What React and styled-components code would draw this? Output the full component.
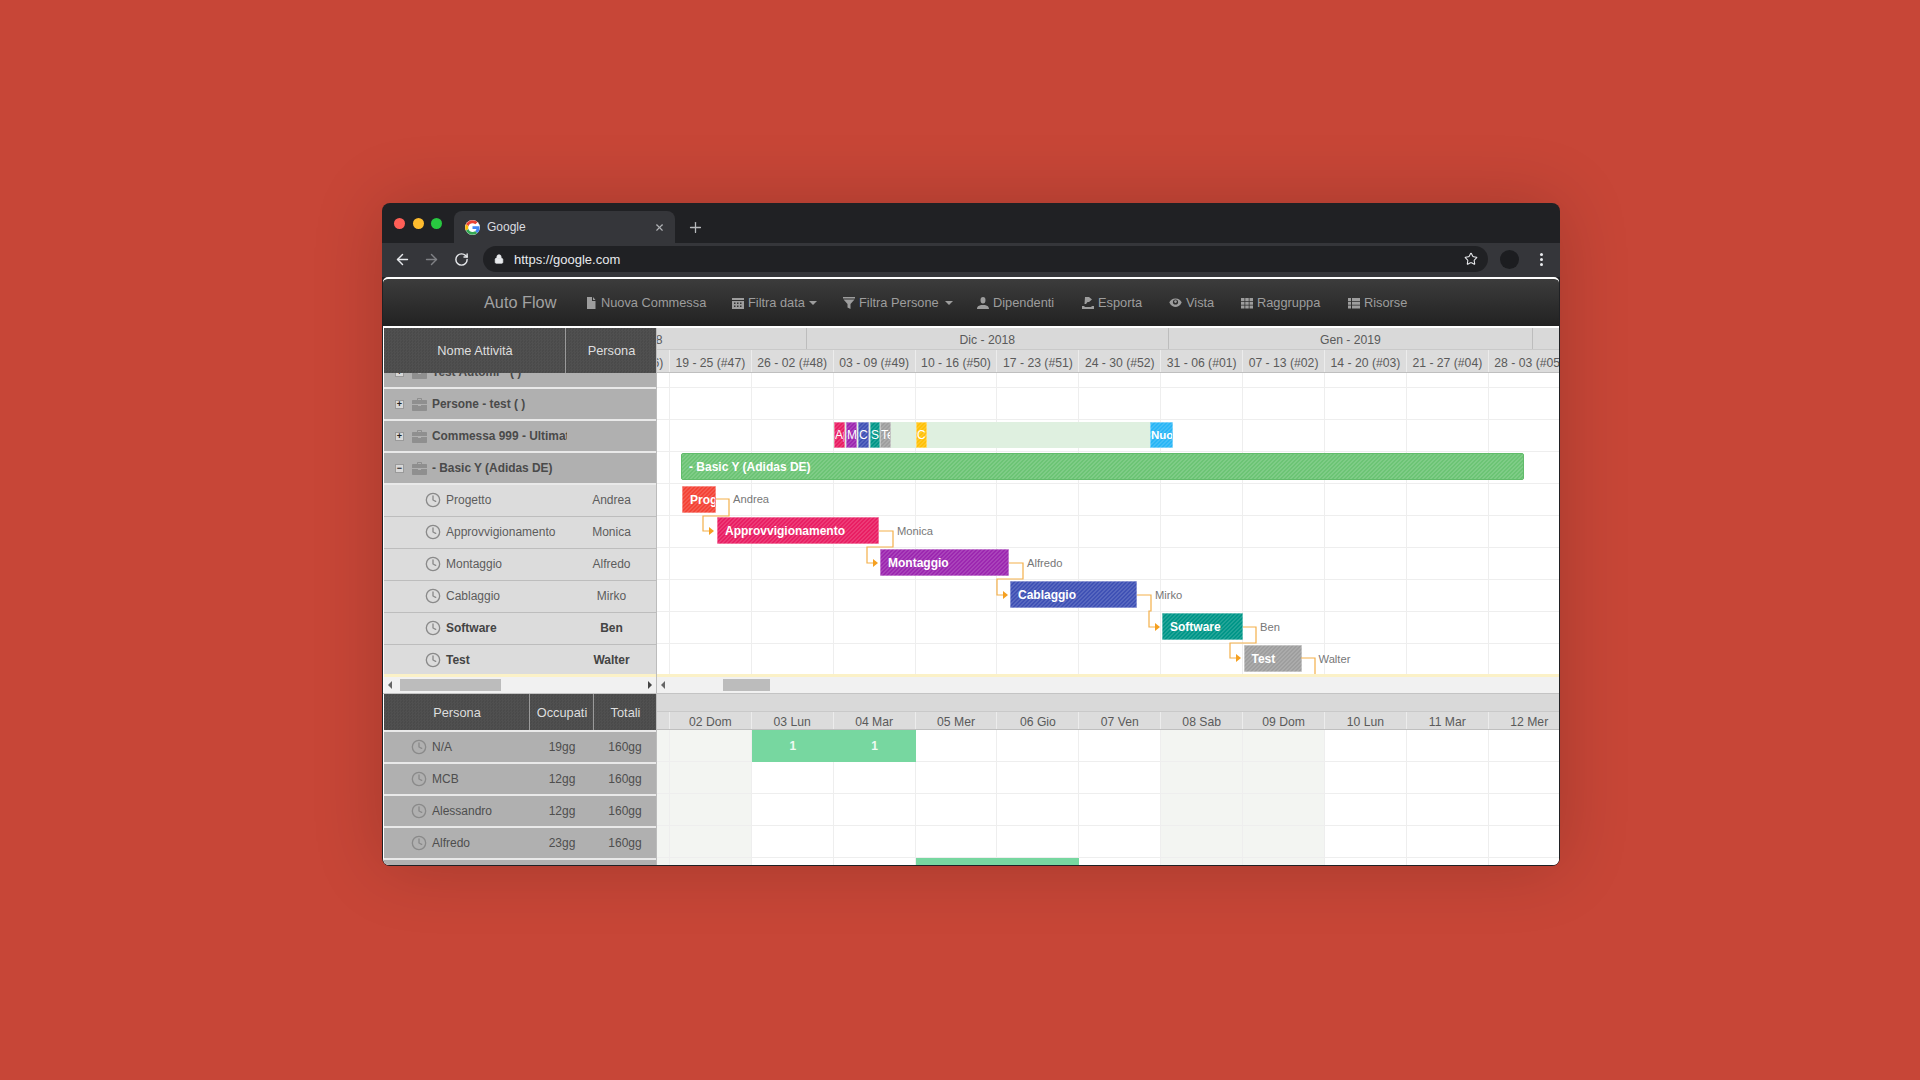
import React from 'react';
import styled, { createGlobalStyle } from 'styled-components';
import { ArrowLeft, ArrowRight, RotateCw, Lock, Star, Clock, X, Plus } from 'lucide-react';

const Global = createGlobalStyle`
  html, body { margin: 0; padding: 0; background: #c74637; }
  body { font-family: "Liberation Sans", Arial, sans-serif; }
  * { box-sizing: border-box; }
`;

const COL = 81.9;
const HATCH = `
  background-image: linear-gradient(135deg, rgba(255,255,255,.13) 25%, transparent 25%, transparent 50%, rgba(255,255,255,.13) 50%, rgba(255,255,255,.13) 75%, transparent 75%);
  background-size: 4px 4px;
`;
const DITHER = `
  background-image: repeating-conic-gradient(rgba(255,255,255,.035) 0 25%, transparent 0 50%);
  background-size: 3px 3px;
`;

const Page = styled.div`
  width: 1920px; height: 1080px; padding: 203px 0 0 382px; overflow: hidden;
`;
const Win = styled.div`
  width: 1178px; height: 663px; display: flex; flex-direction: column;
  background: #202124; border-radius: 8px; overflow: hidden;
  box-shadow: 0 0 70px rgba(0,0,0,.18);
`;
const TabStrip = styled.div`
  height: 40px; flex: none; display: flex; align-items: flex-end; padding-left: 12px;
`;
const Dots = styled.div`
  display: flex; gap: 7.5px; width: 60px; height: 32px; padding-top: 7px; flex: none;
`;
const Dot = styled.span`
  width: 11px; height: 11px; border-radius: 50%; background: ${p => p.$c};
`;
const Tab = styled.div`
  width: 221px; height: 32px; background: #35363a; border-radius: 8px 8px 0 0; flex: none;
  display: flex; align-items: center; padding: 0 10px 0 11px; color: #dadce0; font-size: 12px;
`;
const TabTitle = styled.span`
  margin-left: 7px; flex: 1;
`;
const NewTab = styled.div`
  height: 32px; display: flex; align-items: center; margin-left: 12px; color: #b8babd;
`;
const AddrBar = styled.div`
  height: 34px; flex: none; background: #35363a; display: flex; align-items: center; padding: 0 0 2px 12px; color: #e8eaed;
`;
const NavBtn = styled.div`
  width: ${p => p.$w || 29}px; display: flex; color: ${p => p.$dim ? '#7f8185' : '#e8eaed'};
  padding-left: ${p => p.$pl || 0}px;
`;
const Omni = styled.div`
  width: 1005px; height: 26px; margin-left: 2px; background: #202124; border-radius: 13px;
  display: flex; align-items: center; padding-left: 11px; font-size: 13px; color: #e8eaed;
`;
const UrlText = styled.span`
  margin-left: 10px; flex: 1;
`;
const StarWrap = styled.span`
  display: flex; margin-right: 10px;
`;
const Avatar = styled.div`
  width: 19px; height: 19px; border-radius: 50%; background: #1c1d20; margin-left: 12px; flex: none;
`;
const Kebab = styled.div`
  display: flex; flex-direction: column; gap: 2px; margin-left: 21px;
  span { width: 3px; height: 3px; border-radius: 50%; background: #e8eaed; }
`;

const Body = styled.div`
  flex: 1; min-height: 0; margin: 0 1px 1px; background: #fff; border-top: 2px solid #fff; border-radius: 5px 5px 6px 6px;
  display: flex; flex-direction: column; overflow: hidden;
`;
const Navbar = styled.nav`
  height: 47px; flex: none; margin-bottom: 2px; padding-left: 101px;
  background: linear-gradient(#3c3c3c, #222222); border-radius: 4px 4px 0 0;
  display: flex; align-items: center; color: #9d9d9d; font-size: 12.8px;
`;
const Brand = styled.span`
  font-size: 16.3px; color: #a2a2a2; width: 101px; flex: none;
`;
const NavItem = styled.span`
  width: ${p => p.$w}px; flex: none; display: flex; align-items: center; gap: 4px; color: #9d9d9d;
  svg { flex: none; }
`;
const Caret = styled.i`
  width: 0; height: 0; margin-left: ${p => p.$gap || 0}px; border-left: 4px solid transparent; border-right: 4px solid transparent;
  border-top: 4px solid #9d9d9d;
`;

const Upper = styled.div`
  height: 366px; flex: none; display: flex; border-bottom: 1px solid #c4c4c4;
`;
const Lower = styled.div`
  flex: 1; min-height: 0; display: flex;
`;
const LeftPane = styled.div`
  width: 273px; margin-left: 1px; flex: none; display: flex; flex-direction: column; border-right: 1px solid #bcbcbc; overflow: hidden;
`;
const RightPane = styled.div`
  flex: 1; min-width: 0; display: flex; flex-direction: column; overflow: hidden;
`;
const DarkHead = styled.div`
  height: ${p => p.$h}px; flex: none; display: flex; background-color: #4a4a4a; ${DITHER} color: #dedede; font-size: 12.8px;
`;
const HeadCell = styled.div`
  width: ${p => p.$w}px; flex: none; display: flex; align-items: center; justify-content: center; padding-left: 1px;
  border-right: ${p => p.$line ? '1px solid #9a9a9a' : 'none'};
`;
const List = styled.div`
  height: 301px; flex: none; overflow: hidden; background: #dcdcdc;
`;
const ListInner = styled.div`
  margin-top: -16px;
`;
const Row = styled.div`
  height: 32px; display: flex; align-items: center; color: ${p => p.$group ? '#4a4a4a' : p.$strong ? '#444' : '#5c5c5c'};
  font-size: ${p => p.$group ? 11.9 : 12}px; font-weight: ${p => (p.$group || p.$strong) ? 'bold' : 'normal'};
  background: ${p => p.$group ? '#b0b0b0' : '#dcdcdc'};
  border-bottom: ${p => p.$group ? '2px solid #e9e9e9' : '1px solid #bdbdbd'};
  padding-bottom: ${p => p.$group ? 0 : 1}px;
`;
const Toggle = styled.span`
  width: 9px; height: 9px; margin-left: 11px; flex: none; border: 1px solid #9a9a9a; background: #d8d8d8;
  display: flex; align-items: center; justify-content: center; font-size: 9px; line-height: 7px; color: #222; font-weight: bold;
`;
const GroupName = styled.span`
  width: 135px; margin-left: 5px; white-space: nowrap; overflow: hidden;
`;
const TaskName = styled.span`
  width: 120px; margin-left: 5px; white-space: nowrap; flex: none;
`;
const Person = styled.span`
  width: 91px; text-align: center; flex: none;
`;
const ClockWrap = styled.span`
  display: flex; flex: none; margin-left: ${p => p.$left}px; color: #8a8a8a;
`;
const Bri = styled.span`
  display: flex; margin-left: 8px; flex: none;
`;
const ScrollBar = styled.div`
  height: 16px; flex: none; background: #f1f1f1; display: flex; align-items: center; padding: 0 4px;
`;
const Arrow = styled.i`
  width: 0; height: 0; flex: none; border-top: 4px solid transparent; border-bottom: 4px solid transparent;
  ${p => p.$dir === 'l' ? 'border-right: 4px solid #666;' : 'border-left: 4px solid #444;'}
`;
const Thumb = styled.div`
  width: ${p => p.$w}px; height: 12px; background: #bcbcbc; margin-left: ${p => p.$m}px; flex: none;
`;
const Spacer = styled.div`
  flex: 1;
`;
const YellowLine = styled.div`
  height: 3px; flex: none; background: #fbf1c7;
`;

const TimeHead = styled.div`
  flex: none; background: #d9d9d9; overflow: hidden; color: #5a5a5a; font-size: 12.2px;
`;
const MonthRow = styled.div`
  height: 22px; display: flex; margin-left: -197.4px; border-bottom: 1px solid #c9c9c9; width: 1500px;
`;
const Band = styled.div`
  height: 18px; border-bottom: 1px solid #c9c9c9;
`;
const Month = styled.div`
  width: ${p => p.$w}px; flex: none; border-right: 1px solid #bdbdbd; display: flex; align-items: center; justify-content: center; padding-top: 3px;
`;
const TickRow = styled.div`
  height: ${p => p.$h}px; display: flex; margin-left: -69px; width: 1200px; background: #dcdcdc; border-bottom: 1px solid #bfbfbf;
`;
const Tick = styled.div`
  width: ${COL}px; flex: none; border-right: 1px solid #ececec; display: flex; align-items: center; justify-content: center; white-space: nowrap; padding-top: ${p => p.$pt}px;
`;
const Canvas = styled.div`
  height: 304px; flex: none; position: relative; overflow: hidden;
  background-color: #fff;
  background-image: linear-gradient(180deg, transparent 14px, #eeeeee 14px, #eeeeee 15px, transparent 15px);
  background-size: 100% 32px;
  border-bottom: 3px solid #fbf1c7;
`;
const GridCols = styled.div`
  position: absolute; top: 0; bottom: 0; left: -69px; display: flex;
`;
const GridCol = styled.div`
  width: ${COL}px; flex: none; border-right: 1px solid #eeeeee;
`;
const Bar = styled.div`
  position: absolute; left: ${p => p.$x - 657}px; top: ${p => p.$y - 373}px; width: ${p => p.$w}px; height: ${p => p.$h || 27}px;
  background-color: ${p => p.$c}; ${HATCH}
  border: 1px solid ${p => p.$b || 'rgba(255,255,255,.35)'}; border-radius: ${p => p.$r || 1}px;
  color: #fff; font-size: ${p => p.$fs || 12}px; font-weight: ${p => p.$thin ? 'normal' : 'bold'}; line-height: ${p => (p.$h || 27) - 1}px;
  padding-left: ${p => p.$pl ?? 7}px; white-space: nowrap; overflow: hidden;
`;
const Track = styled.div`
  position: absolute; left: ${833 - 657}px; top: ${422 - 373}px; width: 339px; height: 26px; background: #dff0e0;
`;
const Label = styled.span`
  position: absolute; left: ${p => p.$x - 657}px; top: ${p => p.$y - 373 - 7}px; font-size: 11.2px; line-height: 14px; color: #777; white-space: nowrap;
`;
const Links = styled.svg`
  position: absolute; left: 0; top: 0; width: 100%; height: 100%;
`;
const HeatBody = styled.div`
  flex: 1; margin-left: -69px; width: 1200px; overflow: hidden;
`;
const HeatRow = styled.div`
  height: 32px; display: flex;
`;
const HeatCell = styled.div`
  width: ${COL}px; height: 32px; flex: none; display: flex; align-items: center; justify-content: center; color: #eefaf2; font-size: 12px; font-weight: bold;
  background: ${p => p.$busy ? '#77d7a0' : p.$weekend ? '#f3f5f2' : '#fff'};
  border-right: ${p => p.$busy ? 'none' : '1px solid #eeeeee'};
  border-bottom: ${p => p.$busy ? 'none' : '1px solid #eeeeee'};
`;
const StatList = styled.div`
  padding-top: 2px; background: #e9e9e9;
`;
const StatRow = styled.div`
  height: 32px; display: flex; align-items: center; background: #b0b0b0; border-bottom: 2px solid #e9e9e9; color: #4e4e4e; font-size: 12px;
`;
const StatName = styled.span`
  width: 98px; margin-left: 5px; flex: none;
`;
const StatVal = styled.span`
  width: ${p => p.$w}px; flex: none; text-align: center;
`;

const Ic = ({ children, w = 12, h = 12 }) => (
  <svg width={w} height={h} viewBox="0 0 12 12" fill="#9d9d9d">{children}</svg>
);
const IFile = () => <Ic><path d="M2 0h5v4h3.5v8H2zM8 0l2.5 3H8z" /></Ic>;
const ICal = () => <Ic><path d="M0 1h12v2H0zM0 4h12v8H0z" /><path d="M2 5.5h1.5v1.5H2zM5 5.5h1.5v1.5H5zM8 5.5h1.5v1.5H8zM2 8.5h1.5V10H2zM5 8.5h1.5V10H5zM8 8.5h1.5V10H8z" fill="#333" /></Ic>;
const IFilter = () => <Ic><path d="M0 0h12v1.5H0zM.5 2.5h11L7.5 7v5l-3-1.500V7z" /></Ic>;
const IUser = () => <Ic><path d="M3.500 3a2.500 3 0 1 1 5 0 2.500 3.500 0 0 1-5 0zM0 12c0-3 2.500-3.500 4-4h4c1.500.5 4 1 4 4z" /></Ic>;
const IExport = () => <Ic><path d="M3 0h4l3 2.500L7 5H5.500L4 7H2.500zM0 9h2l1 1h6l1-1h2v3H0z" /></Ic>;
const IEye = () => <svg width="13" height="12" viewBox="0 0 13 12"><path d="M.3 5.500C2 2 4.500 1.500 6.500 1.500s4.500.5 6.200 4c-1.700 3.500-4.200 4.500-6.200 4.500S2 9 .3 5.500z" fill="#9d9d9d" /><circle cx="6.500" cy="5" r="2.600" fill="#2e2e2e" /><circle cx="6.500" cy="4.600" r="1.300" fill="#9d9d9d" /></svg>;
const ITh = () => <Ic><path d="M0 1h3.500v3H0zM4.250 1h3.500v3h-3.500zM8.500 1H12v3H8.500zM0 4.750h3.500v3H0zM4.250 4.750h3.500v3h-3.500zM8.500 4.750H12v3H8.500zM0 8.500h3.500v3H0zM4.250 8.500h3.500v3h-3.500zM8.500 8.500H12v3H8.500z" /></Ic>;
const IList = () => <Ic><path d="M0 1h3v3H0zM4 1h8v3H4zM0 4.750h3v3H0zM4 4.750h8v3H4zM0 8.500h3v3H0zM4 8.500h8v3H4z" /></Ic>;

const Briefcase = () => (
  <svg width="15" height="13" viewBox="0 0 15 13" fill="#8f8f8f">
    <path d="M5 2V.8C5 .3 5.300 0 5.800 0h3.400c.5 0 .8.3.8.8V2h4c.6 0 1 .4 1 1v3H0V3c0-.6.4-1 1-1zm1 0h3V1H6z" />
    <path d="M0 7h6v1h3V7h6v5c0 .6-.4 1-1 1H1c-.6 0-1-.4-1-1z" />
  </svg>
);
const GoogleG = () => (
  <svg width="15" height="15" viewBox="0 0 48 48">
    <circle cx="24" cy="24" r="24" fill="#fff" />
    <path fill="#EA4335" d="M24 10c3.500 0 6.600 1.200 9.100 3.500l6.700-6.700C35.700 3 30.300.7 24 .7 14.800.7 6.900 6 3.100 13.700l7.900 6.100C12.800 14.100 17.900 10 24 10z" />
    <path fill="#4285F4" d="M46.500 24.500c0-1.600-.2-3.100-.4-4.500H24v9h12.700c-.6 2.900-2.200 5.300-4.700 7l7.600 5.900c4.400-4.100 6.900-10.100 6.900-17.400z" />
    <path fill="#FBBC05" d="M11 28.200c-.5-1.400-.7-2.800-.7-4.200s.3-2.900.7-4.200l-7.900-6.100C1.500 17 .6 20.400.6 24s.9 7 2.500 10.300z" />
    <path fill="#34A853" d="M24 47.300c6.300 0 11.600-2.100 15.600-5.400L32 36c-2.100 1.400-4.800 2.300-8 2.300-6.100 0-11.200-4.100-13-9.800l-7.900 6.100C6.900 42 14.800 47.300 24 47.300z" />
  </svg>
);

const weeks = ['12 - 18 (#46)', '19 - 25 (#47)', '26 - 02 (#48)', '03 - 09 (#49)', '10 - 16 (#50)', '17 - 23 (#51)', '24 - 30 (#52)', '31 - 06 (#01)', '07 - 13 (#02)', '14 - 20 (#03)', '21 - 27 (#04)', '28 - 03 (#05)'];
const days = ['01 Sab', '02 Dom', '03 Lun', '04 Mar', '05 Mer', '06 Gio', '07 Ven', '08 Sab', '09 Dom', '10 Lun', '11 Mar', '12 Mer'];
const groups = [
  { t: 'Test Automi - ( )', s: '+' }, { t: 'Persone - test ( )', s: '+' },
  { t: 'Commessa 999 - Ultimate', s: '+' }, { t: '- Basic Y (Adidas DE)', s: '−' },
];
const tasks = [['Progetto', 'Andrea'], ['Approvvigionamento', 'Monica'], ['Montaggio', 'Alfredo'], ['Cablaggio', 'Mirko'], ['Software', 'Ben', 1], ['Test', 'Walter', 1]];
const stats = [['N/A', '19gg'], ['MCB', '12gg'], ['Alessandro', '12gg'], ['Alfredo', '23gg'], ['', '']];
const chips = [
  ['Approvvigionamento', 834, 11, '#e91e63'], ['Montaggio', 846, 11, '#9c27b0'], ['Cablaggio', 858, 10.5, '#3f51b5'], ['Software', 870, 9.5, '#009688'],
  ['Test', 880, 11, '#9e9e9e'], ['Collaudo', 916, 11, '#ffc107'],
];
const bars = [
  ['Progetto', 682, 486, 34, '#f44336'], ['Approvvigionamento', 717, 517, 162, '#e91e63'], ['Montaggio', 880, 549, 129, '#9c27b0'],
  ['Cablaggio', 1010, 581, 127, '#3f51b5'], ['Software', 1162, 613, 81, '#009688'], ['Test', 1243.5, 645, 58, '#9e9e9e'],
];
const labels = [['Andrea', 733, 499], ['Monica', 897, 531], ['Alfredo', 1027, 563], ['Mirko', 1155, 595], ['Ben', 1260, 627], ['Walter', 1318.5, 659]];
const links = [
  [716, 729, 703, 499, 516, 531], [879, 893, 867, 531, 547, 563], [1009, 1023, 997, 563, 579, 595],
  [1137, 1151, 1149, 595, 611, 627], [1243, 1256, 1230, 627, 643, 658],
];
const busy = { 0: [2, 3], 4: [4, 5] };
const weekend = [0, 1, 7, 8];

export default function App() {
  return (
    <Page>
      <Global />
      <Win>
        <TabStrip>
          <Dots><Dot $c="#ff5f57" /><Dot $c="#febc2e" /><Dot $c="#28c840" /></Dots>
          <Tab>
            <GoogleG />
            <TabTitle>Google</TabTitle>
            <X size={11} color="#b0b2b5" strokeWidth={2.5} />
          </Tab>
          <NewTab><Plus size={17} strokeWidth={1.8} /></NewTab>
        </TabStrip>
        <AddrBar>
          <NavBtn><ArrowLeft size={17} strokeWidth={2} /></NavBtn>
          <NavBtn $dim><ArrowRight size={17} strokeWidth={2} /></NavBtn>
          <NavBtn $pl={2}><RotateCw size={15} strokeWidth={2.3} /></NavBtn>
          <Omni>
            <Lock size={10} fill="#e8eaed" color="#e8eaed" />
            <UrlText>https://google.com</UrlText>
            <StarWrap><Star size={14} strokeWidth={1.8} /></StarWrap>
          </Omni>
          <Avatar />
          <Kebab><span /><span /><span /></Kebab>
        </AddrBar>
        <Body>
          <Navbar>
            <Brand>Auto Flow</Brand>
            <NavItem $w={147}><IFile />Nuova Commessa</NavItem>
            <NavItem $w={111}><ICal />Filtra data<Caret /></NavItem>
            <NavItem $w={134}><IFilter />Filtra Persone<Caret $gap={2} /></NavItem>
            <NavItem $w={105}><IUser />Dipendenti</NavItem>
            <NavItem $w={87}><IExport />Esporta</NavItem>
            <NavItem $w={72}><IEye />Vista</NavItem>
            <NavItem $w={107}><ITh />Raggruppa</NavItem>
            <NavItem $w={70}><IList />Risorse</NavItem>
          </Navbar>
          <Upper>
            <LeftPane>
              <DarkHead $h={45}>
                <HeadCell $w={182} $line>Nome Attività</HeadCell>
                <HeadCell $w={90}>Persona</HeadCell>
              </DarkHead>
              <List>
                <ListInner>
                  {groups.map(g => (
                    <Row key={g.t} $group>
                      <Toggle>{g.s}</Toggle>
                      <Bri><Briefcase /></Bri>
                      <GroupName>{g.t}</GroupName>
                    </Row>
                  ))}
                  {tasks.map(([t, p, s]) => (
                    <Row key={t} $strong={s}>
                      <ClockWrap $left={41}><Clock size={16} /></ClockWrap>
                      <TaskName>{t}</TaskName>
                      <Person>{p}</Person>
                    </Row>
                  ))}
                </ListInner>
              </List>
              <YellowLine />
              <ScrollBar>
                <Arrow $dir="l" />
                <Thumb $w={101} $m={8} />
                <Spacer />
                <Arrow $dir="r" />
              </ScrollBar>
            </LeftPane>
            <RightPane>
              <TimeHead>
                <MonthRow>
                  <Month $w={347}>Nov - 2018</Month>
                  <Month $w={362.3}>Dic - 2018</Month>
                  <Month $w={364}>Gen - 2019</Month>
                  <Month $w={300} />
                </MonthRow>
                <TickRow $h={23}>
                  {weeks.map(w => <Tick key={w} $pt={4}>{w}</Tick>)}
                </TickRow>
              </TimeHead>
              <Canvas>
                <GridCols>{weeks.map(w => <GridCol key={w} />)}</GridCols>
                <Track />
                {chips.map(([t, x, w, c]) => (
                  <Bar key={t} $x={x} $y={422} $w={w} $h={26} $c={c} $pl={0} $fs={12} $thin>{t}</Bar>
                ))}
                <Bar $x={1150} $y={422} $w={22.5} $h={26} $c="#29b6f6" $pl={0} $fs={11.5}>Nuovo</Bar>
                <Bar $x={681} $y={453} $w={843} $c="#6cc475" $b="#62bb6b" $r={2}>- Basic Y (Adidas DE)</Bar>
                {bars.map(([t, x, y, w, c]) => (
                  <Bar key={t} $x={x} $y={y} $w={w} $c={c}>{t}</Bar>
                ))}
                <Bar $x={1324} $y={675} $w={83} $h={4} $c="#a9d3da" $b="#a9d3da" />
                <Links>
                  {links.map(([x0, x1, x2, y0, y1, y2]) => (
                    <g key={x0}>
                      <path
                        d={`M${x0 - 657} ${y0 - 373}H${x1 - 657}V${y1 - 373}H${x2 - 657}V${y2 - 373}H${x2 + 7 - 657}`}
                        fill="none" stroke="#f4b04a" strokeWidth="1.2"
                      />
                      <path d={`M${x2 + 6 - 657} ${y2 - 373 - 4}l5 4l-5 4z`} fill="#f5a020" />
                    </g>
                  ))}
                  <path d={`M${1301 - 657} ${658 - 373}H${1315 - 657}V${677 - 373}`} fill="none" stroke="#f4b04a" strokeWidth="1.2" />
                </Links>
                {labels.map(([t, x, y]) => <Label key={t} $x={x} $y={y}>{t}</Label>)}
              </Canvas>
              <ScrollBar>
                <Arrow $dir="l" />
                <Thumb $w={47} $m={58} />
              </ScrollBar>
            </RightPane>
          </Upper>
          <Lower>
            <LeftPane>
              <DarkHead $h={36}>
                <HeadCell $w={146} $line>Persona</HeadCell>
                <HeadCell $w={64} $line>Occupati</HeadCell>
                <HeadCell $w={62}>Totali</HeadCell>
              </DarkHead>
              <StatList>
                {stats.map(([n, v], i) => (
                  <StatRow key={i}>
                    {n && <>
                      <ClockWrap $left={27}><Clock size={16} /></ClockWrap>
                      <StatName>{n}</StatName>
                      <StatVal $w={64}>{v}</StatVal>
                      <StatVal $w={62}>160gg</StatVal>
                    </>}
                  </StatRow>
                ))}
              </StatList>
            </LeftPane>
            <RightPane>
              <TimeHead>
                <Band />
                <TickRow $h={18}>
                  {days.map((d, i) => <Tick key={d} $pt={2}>{i > 0 ? d : ''}</Tick>)}
                </TickRow>
              </TimeHead>
              <HeatBody>
                {[0, 1, 2, 3, 4].map(r => (
                  <HeatRow key={r}>
                    {days.map((d, c) => {
                      const on = (busy[r] || []).includes(c);
                      return (
                        <HeatCell key={d} $busy={on} $weekend={weekend.includes(c)}>
                          {on && r === 0 ? '1' : ''}
                        </HeatCell>
                      );
                    })}
                  </HeatRow>
                ))}
              </HeatBody>
            </RightPane>
          </Lower>
        </Body>
      </Win>
    </Page>
  );
}
